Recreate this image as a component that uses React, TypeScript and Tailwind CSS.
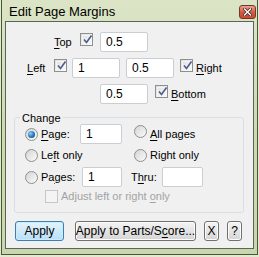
import React from 'react';

const ui = { fontFamily: '"Liberation Sans", Arial, sans-serif' };

function U({ children }: { children: React.ReactNode }) {
  return <span className="underline underline-offset-[2px]">{children}</span>;
}

function Check({ checked = false, disabled = false }: { checked?: boolean; disabled?: boolean }) {
  return (
    <span
      className={
        'relative inline-block w-[13px] h-[13px] shrink-0 border ' +
        (disabled ? 'border-[#c7c7c7] bg-[#f4f4f4]' : 'border-[#8e8f8f] bg-linear-to-br from-[#dcdcdc] to-[#ffffff]')
      }
    >
      {!disabled && <span className="absolute inset-[1px] border border-[#f4f4f4]" />}
      {checked && (
        <svg className="absolute left-[1px] top-[0px]" width="11" height="11" viewBox="0 0 11 11">
          <path d="M2 5.5 L4.5 8.5 L9.5 1.5" fill="none" stroke="#4a5e8c" strokeWidth="1.6" />
        </svg>
      )}
    </span>
  );
}

function Radio({ checked = false }: { checked?: boolean }) {
  return (
    <span className="relative inline-flex items-center justify-center w-[13px] h-[13px] shrink-0 rounded-full border border-[#8e8f8f] bg-linear-to-br from-[#d4d4d4] to-[#fbfbfb]">
      {checked && (
        <span className="w-[7px] h-[7px] rounded-full bg-[radial-gradient(circle_at_35%_35%,#8fd0f5,#1a6fb3_60%,#0d4d85)]" />
      )}
    </span>
  );
}

function Field({ w, value }: { w: string; value?: string }) {
  return (
    <span className={'flex items-center h-[20px] pl-[5px] bg-white border border-[#c9ced4] rounded-[2px] text-[12px] text-black ' + w}>
      {value}
    </span>
  );
}

function Btn({ children, w, focus = false }: { children: React.ReactNode; w: string; focus?: boolean }) {
  return (
    <span
      className={
        'flex items-center justify-center h-[20px] rounded-[3px] border text-[12px] text-black whitespace-nowrap ' +
        w +
        (focus
          ? ' border-[#3c7fb1] bg-linear-to-b from-[#e5f4fc] to-[#b7dff6] shadow-[inset_0_0_0_1px_#c7ecfd]'
          : ' border-[#707070] bg-linear-to-b from-[#f4f4f4] to-[#d5d5d5] shadow-[inset_0_0_0_1px_#fcfcfc]')
      }
    >
      <span>{children}</span>
    </span>
  );
}

export default function App() {
  return (
    <div className="w-[259px] h-[257px] bg-[#e3ead2] pl-[1px] pr-[1px] pb-[2px]" style={ui}>
      <div className="h-full flex flex-col border border-t-0 border-[#4b5637] bg-linear-to-b from-[#dbe5c6] via-[#cddbb3] to-[#c9d7ae] px-[3px] pb-[5px]">
        {/* title bar */}
        <div className="h-[21px] flex items-center justify-between shrink-0">
          <span className="pl-[4px] pt-[3px] text-[13px] text-black">Edit Page Margins</span>
          <span className="mt-[2px] mr-[-2px] flex items-center justify-center w-[17px] h-[14px] rounded-[3px] border border-[#6c3a30] bg-linear-to-b from-[#eea08c] via-[#d9583e] to-[#c94a2c]">
            <svg width="9" height="8" viewBox="0 0 9 8">
              <path d="M1.5 1 L7.5 7 M7.5 1 L1.5 7" stroke="#3b2a2a" strokeWidth="3" strokeLinecap="square" />
              <path d="M1.5 1 L7.5 7 M7.5 1 L1.5 7" stroke="#ffffff" strokeWidth="1.4" strokeLinecap="square" />
            </svg>
          </span>
        </div>

        {/* client area */}
        <div className="flex-1 border border-[#5c6358] bg-[#f0f0f0] text-[11px] text-black">
          <div className="flex items-center mt-[10px] pl-[48px] h-[20px]">
            <span className="w-[20px]"><U>T</U>op</span>
            <span className="ml-[6px]"><Check checked /></span>
            <span className="ml-[7px]"><Field w="w-[48px]" value="0.5" /></span>
          </div>

          <div className="flex items-center mt-[6px] pl-[21px] h-[20px]">
            <span className="w-[20px]"><U>L</U>eft</span>
            <span className="ml-[7px]"><Check checked /></span>
            <span className="ml-[5px]"><Field w="w-[48px]" value="1" /></span>
            <span className="ml-[6px]"><Field w="w-[48px]" value="0.5" /></span>
            <span className="ml-[6px]"><Check checked /></span>
            <span className="ml-[3px]"><U>R</U>ight</span>
          </div>

          <div className="flex items-center mt-[6px] pl-[94px] h-[20px]">
            <Field w="w-[48px]" value="0.5" />
            <span className="ml-[7px]"><Check checked /></span>
            <span className="ml-[3px]"><U>B</U>ottom</span>
          </div>

          {/* Change group */}
          <div className="relative mt-[13px] ml-[8px] w-[230px] h-[96px] border border-[#d5dfe5] rounded-[3px]">
            <span className="absolute left-[5px] top-[-8px] px-[2px] bg-[#f0f0f0] text-[11px]">Change</span>

            <div className="flex items-center mt-[6px] pl-[10px] h-[20px]">
              <Radio checked />
              <span className="ml-[3px] w-[39px]"><U>P</U>age:</span>
              <Field w="w-[42px]" value="1" />
              <span className="ml-[12px]"><Radio /></span>
              <span className="ml-[3px]"><U>A</U>ll pages</span>
            </div>

            <div className="flex items-center mt-[1px] pl-[10px] h-[20px]">
              <Radio />
              <span className="ml-[3px] w-[93px]">Le<U>f</U>t only</span>
              <Radio />
              <span className="ml-[3px]">Right only</span>
            </div>

            <div className="flex items-center mt-[2px] pl-[10px] h-[20px]">
              <Radio />
              <span className="ml-[3px] w-[41px]">Pa<U>g</U>es:</span>
              <Field w="w-[40px]" value="1" />
              <span className="ml-[9px] w-[31px]">T<U>h</U>ru:</span>
              <Field w="w-[41px]" />
            </div>

            <div className="flex items-center mt-[1px] pl-[30px] h-[16px] text-[#a3a3a3]">
              <Check disabled />
              <span className="ml-[3px]">Adjust left or right <U>o</U>nly</span>
            </div>
          </div>

          {/* buttons */}
          <div className="flex items-center mt-[8px] pl-[9px]">
            <Btn w="w-[49px]" focus>Apply</Btn>
            <span className="ml-[11px]"><Btn w="w-[121px]">Apply to Parts/S<U>c</U>ore...</Btn></span>
            <span className="ml-[8px]"><Btn w="w-[15px]">X</Btn></span>
            <span className="ml-[8px]"><Btn w="w-[15px]">?</Btn></span>
          </div>
        </div>
      </div>
    </div>
  );
}
